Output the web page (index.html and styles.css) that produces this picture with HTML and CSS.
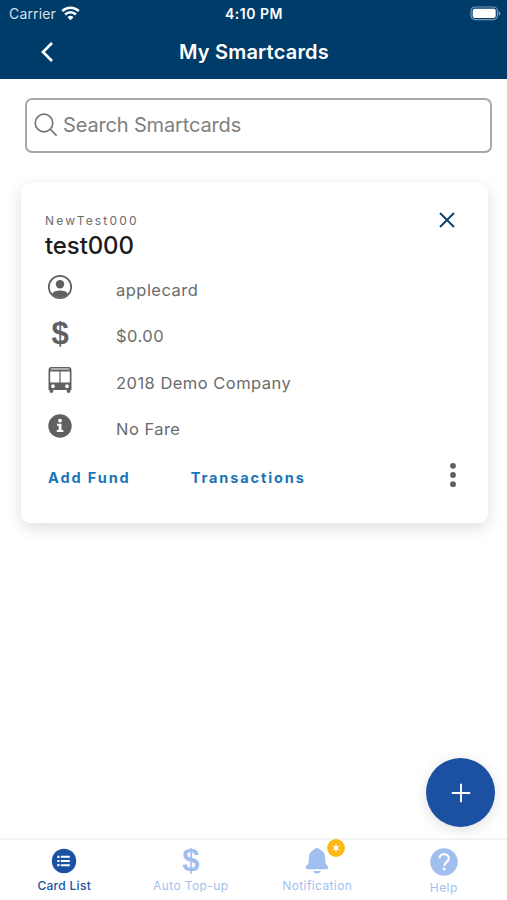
FILE: index.html
```html
<!DOCTYPE html>
<html lang="en">
<head>
  <meta charset="UTF-8">
  <meta name="viewport" content="width=device-width, initial-scale=1.0">
  <title>My Smartcards</title>
  <link rel="stylesheet" href="styles.css">
</head>
<body>
  <header>
    <div class="status">
      <div class="carrier">
        <span>Carrier</span>
        <svg width="19" height="15" viewBox="0 0 19 15" fill="none" stroke="#fff" stroke-width="2.5">
          <path d="M1.2 5.2a12 12 0 0 1 16.6 0"/>
          <path d="M4.1 8.5a7.8 7.8 0 0 1 10.8 0"/>
          <path d="M9.5 14.3l-3-3.1a4.4 4.4 0 0 1 6 0z" fill="#fff" stroke="none"/>
        </svg>
      </div>
      <div class="time">4:10 PM</div>
      <svg class="battery" width="31" height="15" viewBox="0 0 31 15">
        <rect x="1" y="1" width="26.5" height="12.6" rx="4" fill="none" stroke="#7b9ab6" stroke-width="1.2"/>
        <rect x="2.7" y="2.7" width="23" height="9.2" rx="2" fill="#fff"/>
        <path d="M28.7 5.2a2.3 2.3 0 0 1 0 4.4z" fill="#7b9ab6"/>
      </svg>
    </div>
    <div class="navbar">
      <svg class="back" width="14" height="22" viewBox="0 0 14 22" fill="none" stroke="#fff" stroke-width="2.7">
        <path d="M12 2L3 11l9 9"/>
      </svg>
      <h1>My Smartcards</h1>
    </div>
  </header>

  <main>
    <div class="search">
      <svg width="24" height="24" viewBox="0 0 24 24" fill="none" stroke="#777" stroke-width="1.7">
        <circle cx="10" cy="10" r="8.8"/>
        <path d="M16.3 16.3l6.3 6.3"/>
      </svg>
      <span>Search Smartcards</span>
    </div>

    <div class="card">
      <div class="card-head">
        <div>
          <div class="card-number">NewTest000</div>
          <h2>test000</h2>
        </div>
        <svg class="close" width="16" height="16" viewBox="0 0 16 16" stroke="#0b416e" stroke-width="1.9">
          <path d="M1 1l14 14M15 1L1 15"/>
        </svg>
      </div>

      <div class="rows">
        <div class="row">
          <svg width="26" height="26" viewBox="0 0 26 26">
            <circle cx="13" cy="13" r="11.2" fill="none" stroke="#606060" stroke-width="1.7"/>
            <circle cx="13" cy="10.3" r="4.2" fill="#606060"/>
            <path d="M5 20c2-4.6 14-4.600 16 0a11 11 0 0 1-16 0z" fill="#606060"/>
          </svg>
          <span>applecard</span>
        </div>
        <div class="row">
          <b class="dollar">$</b>
          <span>$0.00</span>
        </div>
        <div class="row">
          <svg width="26" height="26" viewBox="0 0 26 26">
            <path fill="#606060" fill-rule="evenodd" d="M4.5 0h17a3 3 0 0 1 3 3v20h-1v1a1.800 1.800 0 0 1-3.800 0v-1H6.300v1a1.800 1.800 0 0 1-3.800 0v-1h-1V3a3 3 0 0 1 3-3zM4.500 1.500a1 1 0 0 0-1 1h19a1 1 0 0 0-1-1zM3.200 4.500v11h9.200v-11zM13.600 4.500v11h9.200v-11zM6 17.300a1.900 1.900 0 1 0 0 3.800 1.900 1.900 0 0 0 0-3.800zM20 17.300a1.900 1.900 0 1 0 0 3.800 1.900 1.900 0 0 0 0-3.800z"/>
          </svg>
          <span>2018 Demo Company</span>
        </div>
        <div class="row">
          <svg width="26" height="26" viewBox="0 0 26 26">
            <circle cx="13" cy="13" r="11.7" fill="#606060"/>
            <circle cx="13" cy="7.6" r="1.9" fill="#fff"/>
            <path d="M10 10.700h4.500v6.400h1.900v2H9.800v-2h1.900v-4.400H10z" fill="#fff"/>
          </svg>
          <span>No Fare</span>
        </div>
      </div>

      <div class="actions">
        <a>Add Fund</a>
        <a>Transactions</a>
        <svg width="6" height="26" viewBox="0 0 6 26" fill="#606060">
          <circle cx="3" cy="3.8" r="2.9"/>
          <circle cx="3" cy="13" r="2.9"/>
          <circle cx="3" cy="22.2" r="2.9"/>
        </svg>
      </div>
    </div>
  </main>

  <div class="fab">
    <svg width="20" height="20" viewBox="0 0 20 20" stroke="#fff" stroke-width="1.9">
      <path d="M10 .8v18.400M.8 10h18.400"/>
    </svg>
  </div>

  <nav>
    <div class="tab active">
      <svg width="26" height="26" viewBox="0 0 26 26">
        <circle cx="13" cy="13" r="12.2" fill="#1b51a0"/>
        <path d="M9.800 8.800h9M9.800 13h9M9.800 17.200h9" stroke="#fff" stroke-width="1.9"/>
        <path d="M6.300 8.800h2.200M6.300 13h2.200M6.300 17.200h2.200" stroke="#fff" stroke-width="2.2"/>
      </svg>
      <span>Card List</span>
    </div>
    <div class="tab">
      <b class="dollar">$</b>
      <span>Auto Top-up</span>
    </div>
    <div class="tab">
      <div class="bell">
        <svg width="26" height="26" viewBox="0 0 26 26" fill="#a1bfee">
          <path d="M13 0c1.300 0 3 1.200 4 2.300 2.500 1.300 4 3.500 4.100 7.100.1 5 .5 6.900 2.600 8.700 1.100 1 .7 3.100-1 3.100H3.300c-1.700 0-2.100-2.100-1-3.100 2.100-1.800 2.500-3.700 2.600-8.700.1-3.600 1.600-5.800 4.100-7.100C10 1.200 11.700 0 13 0z"/>
          <path d="M9.200 23h7.600c-.6 1.500-1.900 2.600-3.800 2.600S9.800 24.500 9.200 23z"/>
        </svg>
        <svg class="badge" width="18" height="18" viewBox="0 0 18 18">
          <circle cx="9" cy="9" r="8.9" fill="#fdb813"/>
          <path d="M9 5v8M5.500 7l7 4M12.500 7l-7 4" stroke="#fff" stroke-width="1"/>
          <circle cx="9" cy="9" r="2.1" fill="#fff"/>
        </svg>
      </div>
      <span>Notification</span>
    </div>
    <div class="tab help">
      <svg width="28" height="28" viewBox="0 0 28 28">
        <circle cx="14" cy="14" r="13.7" fill="#a1bfee"/>
        <path d="M9.500 10.300c.3-5.600 9.300-5.300 9.300.1 0 3.600-4.500 3.700-4.500 7.300" fill="none" stroke="#fff" stroke-width="2.2"/>
        <circle cx="14.200" cy="21" r="1.500" fill="#fff"/>
      </svg>
      <span>Help</span>
    </div>
  </nav>
</body>
</html>
```
FILE: styles.css
```css
* {
  box-sizing: border-box;
}

body {
  font-family: Inter, sans-serif;
  background-color: #fff;
  margin: 0;
  height: 900px;
  display: flex;
  flex-direction: column;
  overflow: hidden;
}

svg {
  display: block;
  flex: none;
}

header {
  height: 79px;
  background-color: #003c69;
  color: #fff;
}

.status {
  height: 27px;
  padding: 0 6px 0 9px;
  display: grid;
  grid-template-columns: 1fr auto 1fr;
  align-items: center;
  font-size: 14px;
}

.carrier {
  display: flex;
  align-items: center;
  gap: 5px;
  color: #d5e0ea;
  letter-spacing: 0.15px;
}

.time {
  font-weight: 600;
  font-size: 14px;
  letter-spacing: 0.5px;
  margin-left: -2px;
}

.battery {
  justify-self: end;
}

.navbar {
  height: 50px;
  padding: 0 39px 0 40px;
  display: grid;
  grid-template-columns: 1fr auto 1fr;
  align-items: center;
}

h1 {
  margin: 0;
  font-size: 20px;
  font-weight: 600;
  letter-spacing: 0.2px;
}

main {
  flex: 1;
  padding: 19px 15px 0 21px;
}

.search {
  height: 55px;
  margin-left: 4px;
  padding: 0 9px 2px;
  display: flex;
  align-items: center;
  gap: 4px;
  border: 2px solid #a8a8a8;
  border-radius: 7px;
  font-size: 20px;
  letter-spacing: -0.15px;
  color: #808080;
}

.search svg {
  margin-left: -2px;
  margin-right: 1px;
}

.card {
  width: 467px;
  height: 340px;
  margin-top: 30px;
  padding: 28px 24px 0;
  border-radius: 9px;
  background-color: #fff;
  box-shadow: 0 5px 16px rgba(0, 0, 0, 0.13);
}

.card-head {
  display: flex;
  justify-content: space-between;
}

.card-number {
  font-size: 12px;
  line-height: 19px;
  letter-spacing: 2.2px;
  color: #6b6b6b;
}

h2 {
  margin: 0;
  font-size: 24px;
  line-height: 32px;
  font-weight: 500;
  letter-spacing: -0.1px;
  color: #1c1c1c;
}

.close {
  margin: 1px 9px 0 0;
}

.rows {
  margin-top: 12px;
}

.row {
  height: 46.4px;
  display: flex;
  align-items: flex-start;
  gap: 43px;
  font-size: 16.5px;
  line-height: 32px;
  letter-spacing: 0.47px;
  color: #6b6b6b;
}

.row > :first-child {
  margin-left: 2px;
}

.dollar {
  width: 26px;
  font-family: "Liberation Sans", sans-serif;
  font-size: 31px;
  line-height: 26px;
  letter-spacing: 0;
  text-align: center;
  color: #606060;
}

.row .dollar {
  margin-top: 1px;
}

.actions {
  display: flex;
  align-items: center;
  margin-top: -2px;
  padding: 2px 8px 0 3px;
  font-size: 14.5px;
  line-height: 26px;
  font-weight: 700;
  letter-spacing: 1.9px;
  color: #1a75b8;
}

.actions a {
  padding-top: 5px;
}

.actions a + a {
  margin-left: 60px;
}

.actions svg {
  margin-left: auto;
}

.fab {
  position: absolute;
  left: 426px;
  top: 758px;
  width: 69px;
  height: 69px;
  display: flex;
  align-items: center;
  justify-content: center;
  border-radius: 50%;
  background-color: #1b51a0;
  box-shadow: 0 3px 14px rgba(0, 0, 0, 0.13);
}

nav {
  height: 62px;
  padding-left: 1px;
  display: grid;
  grid-template-columns: repeat(4, 1fr);
  border-top: 2px solid #f4f4f4;
}

.tab {
  padding-top: 8px;
  display: flex;
  flex-direction: column;
  align-items: center;
  gap: 3px;
  font-size: 12px;
  line-height: 18px;
  letter-spacing: 0.4px;
  color: #a1bfee;
}

.tab .dollar {
  color: #a1bfee;
}

.active {
  color: #1b51a0;
  font-weight: 500;
  letter-spacing: 0.3px;
}

.bell {
  position: relative;
}

.badge {
  position: absolute;
  left: 23px;
  top: -9px;
}
```
